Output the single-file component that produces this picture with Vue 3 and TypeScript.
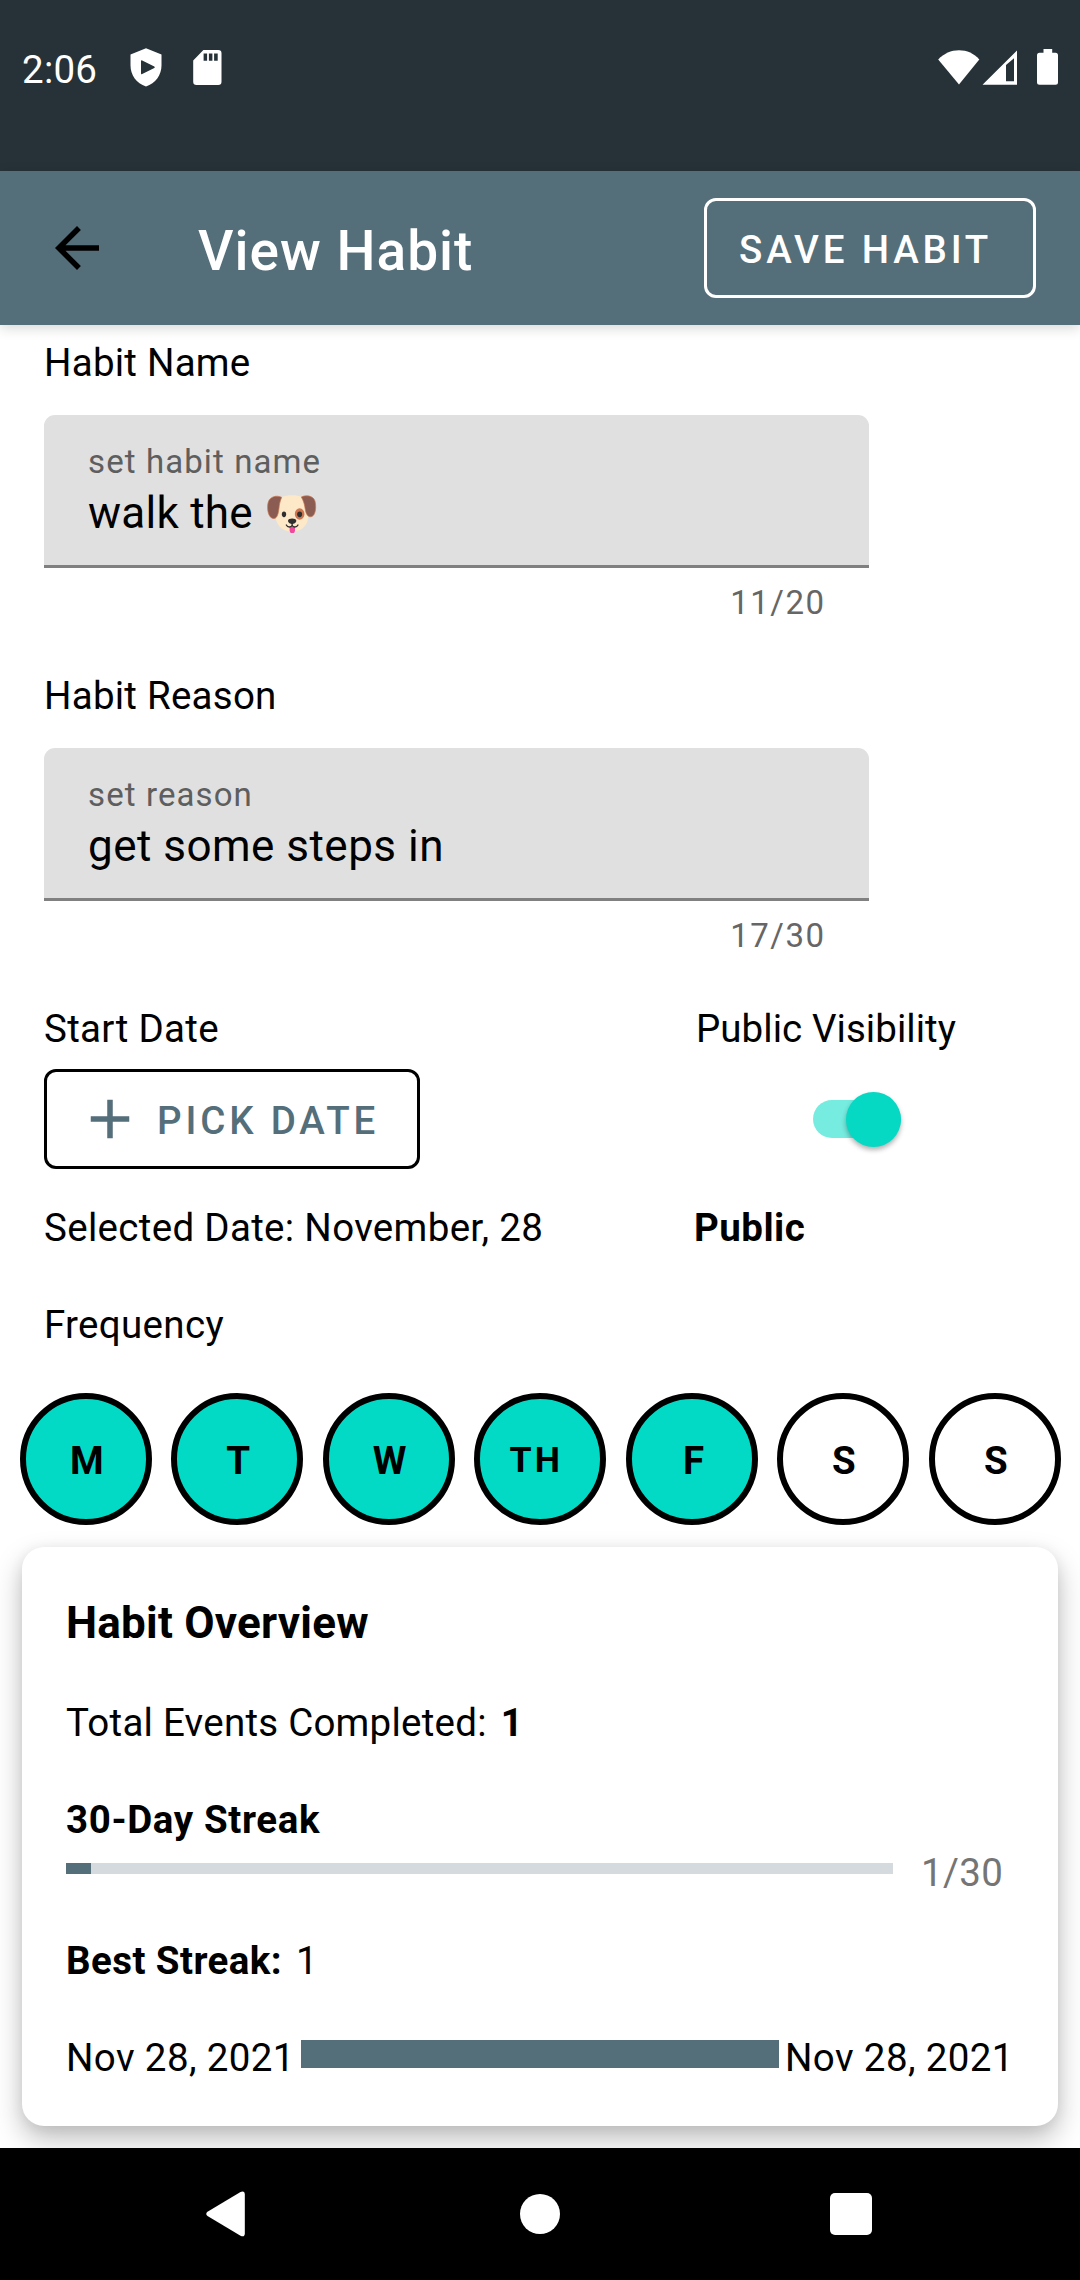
<script setup lang="ts">
interface Field {
  label: string
  hint: string
  value: string
  emoji: boolean
  counter: string
}

interface Day {
  label: string
  on: boolean
  size?: 'small'
  shift: number
}

const fields: Field[] = [
  { label: 'Habit Name', hint: 'set habit name', value: 'walk the', emoji: true, counter: '11/20' },
  { label: 'Habit Reason', hint: 'set reason', value: 'get some steps in', emoji: false, counter: '17/30' },
]

const days: Day[] = [
  { label: 'M', on: true, shift: 5 },
  { label: 'T', on: true, shift: 5 },
  { label: 'W', on: true, shift: 5 },
  { label: 'TH', on: true, size: 'small', shift: -8 },
  { label: 'F', on: true, shift: 7 },
  { label: 'S', on: false, shift: 5 },
  { label: 'S', on: false, shift: 6 },
]

const streakPercent = 3
</script>

<template>
  <div class="screen">
    <div class="status">
      <span class="clock">2:06</span>
      <svg class="shield" width="32" height="39" viewBox="0 0 32 39">
        <path fill="#fff" fill-rule="evenodd" d="M16 .3 31.5 6.6V17.500C31.500 27 25.500 35.500 16 38.400 6.500 35.500 .5 27 .5 17.500V6.600ZM11 13.200V25.200Q11 26.600 12.200 26L24.300 20Q25.400 19.200 24.300 18.500L12.200 12.500Q11 12 11 13.200Z" />
      </svg>
      <svg class="sd" width="29" height="35" viewBox="0 0 29 35">
        <path fill="#fff" fill-rule="evenodd" d="M10.400 0H25.200Q28.500 0 28.500 3.300V31.700Q28.500 35 25.200 35H3.500Q.2 35 .2 31.700V10.400ZM10.600 3.500V10.700H14.100V3.500ZM15.900 3.500V10.700H19.400V3.500ZM21.100 3.500V10.700H24.700V3.500Z" />
      </svg>
      <svg class="wifi" width="42" height="35" viewBox="0 0 42 35">
        <path fill="#fff" d="M.2 9.500C6 3.500 13 .3 21 .3S36 3.500 41.300 9.500L21 34.500Z" />
      </svg>
      <svg class="signal" width="36" height="35" viewBox="0 0 36 35">
        <path fill="#fff" fill-rule="evenodd" d="M.5 34.800 35 .6V34.800ZM24 15V31.200H32V8.200Z" />
      </svg>
      <svg class="battery" width="21" height="36" viewBox="0 0 21 36">
        <path fill="#fff" d="M6.500 0H15.200V3.700H18.500Q21 3.700 21 6.200V33.300Q21 35.800 18.500 35.800H2.500Q0 35.800 0 33.300V6.200Q0 3.700 2.500 3.700H6.500Z" />
      </svg>
    </div>

    <header class="appbar">
      <svg class="back" width="66" height="66" viewBox="0 0 24 24">
        <path d="M20 11H7.830l5.590-5.590L12 4l-8 8 8 8 1.410-1.410L7.830 13H20v-2z" />
      </svg>
      <h1 class="title">View Habit</h1>
      <button class="save">SAVE HABIT</button>
    </header>

    <main class="content">
      <section v-for="f in fields" :key="f.label" class="group">
        <div class="label">{{ f.label }}</div>
        <div class="field">
          <div class="hint">{{ f.hint }}</div>
          <div class="value" :class="{ 'with-emoji': f.emoji }">
            <span>{{ f.value }}</span>
            <svg v-if="f.emoji" class="dog" width="49.300" height="38.300" viewBox="54 44 148 115" role="img" aria-label="dog face">
              <path fill="#fde8c8" d="M128 45C154 45 166 51 172 70C177 84 179 101 177 115C174 139 154 154 129 154C104 154 84 139 80 113C78 98 79 83 85 69C91 51 103 45 128 45Z" />
              <path fill="#8b5d52" stroke="#c9764f" stroke-width="2" d="M98 51C82 43 61 49 57 68C54 83 56 108 70 114C85 119 88 99 90 84C91 73 93 63 98 51Z" />
              <path fill="#8b5d52" stroke="#c9764f" stroke-width="2" d="M157 50C171 43 193 46 198 62C202 76 201 102 190 108C179 114 171 102 169 88C167 73 164 62 157 50Z" />
              <ellipse cx="152" cy="101" rx="14.500" ry="17" fill="#cf7650" />
              <ellipse cx="105" cy="102" rx="6.500" ry="8.500" fill="#2f2f2f" />
              <ellipse cx="152" cy="102" rx="7.500" ry="8.500" fill="#2f2f2f" />
              <path fill="#f0489c" d="M122 139H138V151Q137 159 130 159T122 151Z" />
              <path fill="#2f2f2f" d="M117 121C117 112 142 112 142 121C142 127 134 131 129.500 131S117 127 117 121Z" />
              <path fill="none" stroke="#2f2f2f" stroke-width="4" stroke-linecap="round" d="M112 134C116 142 127 142 129.500 135C132 142 143 142 147 134M129.500 129V136" />
            </svg>
          </div>
        </div>
        <div class="counter">{{ f.counter }}</div>
      </section>

      <section class="options">
        <div class="col">
          <div class="label start">Start Date</div>
          <button class="pick">
            <svg width="66" height="66" viewBox="0 0 24 24">
              <path d="M19 13h-6v6h-2v-6H5v-2h6V5h2v6h6v2z" />
            </svg>
            <span>PICK DATE</span>
          </button>
          <div class="label selected">Selected Date: November, 28</div>
        </div>
        <div class="col">
          <div class="label visibility">Public Visibility</div>
          <div class="switch-row">
            <div class="track"><div class="thumb"></div></div>
          </div>
          <div class="label bold">Public</div>
        </div>
      </section>

      <div class="label frequency">Frequency</div>
      <div class="days">
        <div v-for="(d, i) in days" :key="i" class="day" :class="[{ on: d.on }, d.size]">
          <span :style="{ marginLeft: d.shift + 'px' }">{{ d.label }}</span>
        </div>
      </div>

      <section class="card">
        <h2 class="card-title">Habit Overview</h2>
        <div class="line total"><span>Total Events Completed:</span><b>1</b></div>
        <div class="line bold streak">30-Day Streak</div>
        <div class="progress-row">
          <div class="progress"><div class="bar" :style="{ width: streakPercent + '%' }"></div></div>
          <span class="ratio">1/30</span>
        </div>
        <div class="line best"><b>Best Streak:</b><span>1</span></div>
        <div class="range">
          <span>Nov 28, 2021</span>
          <div class="range-bar"></div>
          <span>Nov 28, 2021</span>
        </div>
      </section>
    </main>

    <nav class="nav">
      <svg width="40" height="46" viewBox="0 0 40 46">
        <path fill="#fff" d="M1.500 20.800 34.500 1Q38.800-.5 38.800 3.500V42.500Q38.800 46.500 34.500 44.800L1.500 25Q-1 22.900 1.500 20.800Z" />
      </svg>
      <div class="home"></div>
      <div class="recent"></div>
    </nav>
  </div>
</template>

<style>
body {
  margin: 0;
  background: #fff;
}
</style>

<style scoped>
.screen {
  width: 1080px;
  height: 2280px;
  overflow: hidden;
  display: flex;
  flex-direction: column;
  background: #fff;
  color: #000;
  font-family: Roboto, "Liberation Sans", sans-serif;
  font-size: 38.5px;
  line-height: 51px;
  letter-spacing: 0.24px;
}
.status {
  box-sizing: border-box;
  height: 171px;
  flex: none;
  display: flex;
  align-items: flex-start;
  padding: 44px 22px 0;
  background: #263238;
  color: #fff;
}
.clock { width: 108px; }
.shield { margin-top: 4px; }
.sd { margin: 6px 0 0 31px; }
.wifi { margin: 6px 0 0 auto; }
.signal { margin: 6px 0 0 2px; }
.battery { margin: 5px 0 0 19px; }
svg { display: block; flex: none; }
.appbar {
  box-sizing: border-box;
  position: relative;
  height: 154px;
  flex: none;
  display: flex;
  align-items: center;
  padding: 0 44px;
  background: #546e7a;
  color: #fff;
  box-shadow: 0 3px 12px rgba(0, 0, 0, 0.16);
}
.back { fill: #000; }
.title {
  margin: 6px 0 0 88px;
  font-size: 55px;
  line-height: 64px;
  font-weight: 500;
  letter-spacing: 1px;
}
button {
  box-sizing: border-box;
  height: 100px;
  border: 3px solid #fff;
  border-radius: 12px;
  background: transparent;
  color: #fff;
  font-family: inherit;
  font-size: 38.5px;
  line-height: 51px;
  font-weight: 500;
  letter-spacing: 3.84px;
  text-align: left;
  white-space: nowrap;
}
.save {
  width: 332px;
  margin-left: auto;
  padding: 3px 0 0 32px;
}
.content {
  height: 1823px;
  flex: none;
  overflow: hidden;
  display: flex;
  flex-direction: column;
  padding-top: 12px;
  box-sizing: border-box;
}
.label { white-space: nowrap; }
.bold { font-weight: 700; }
.group {
  width: 825px;
  margin: 0 0 45px 44px;
}
.field {
  box-sizing: border-box;
  height: 153px;
  margin-top: 27px;
  padding: 24px 0 0 44px;
  border-bottom: 3px solid #808080;
  border-radius: 11px 11px 0 0;
  background: #e0e0e0;
}
.hint {
  color: #5e5e5e;
  font-size: 33px;
  line-height: 45px;
  letter-spacing: 1.1px;
}
.value {
  display: flex;
  font-size: 44px;
  line-height: 60px;
  letter-spacing: 0.48px;
  margin-top: -1px;
}
.with-emoji { letter-spacing: 0.25px; }
.dog { margin: 12px 0 0 14.5px; }
.counter {
  margin-top: 12px;
  padding-right: 43.5px;
  text-align: right;
  font-size: 33px;
  line-height: 45px;
  letter-spacing: 1.5px;
  color: #666;
}
.options {
  display: grid;
  grid-template-columns: 650px 1fr;
  margin-left: 44px;
}
.start, .selected, .frequency { letter-spacing: 0.32px; }
.pick {
  display: flex;
  align-items: center;
  width: 376px;
  margin: 15px 0 33px;
  padding: 0 0 0 30px;
  border-color: #000;
  color: #546e7a;
}
.pick svg { fill: #546e7a; }
.pick span { margin: 3px 0 0 14px; }
.visibility { padding-left: 2px; letter-spacing: 0.05px; }
.col .bold { letter-spacing: 0.45px; }
.switch-row {
  height: 100px;
  margin: 15px 0 33px;
  display: flex;
  align-items: center;
  padding-left: 119px;
}
.track {
  width: 88px;
  height: 38px;
  border-radius: 19px;
  background: #76ebdf;
  display: flex;
  align-items: center;
  justify-content: flex-end;
}
.thumb {
  width: 55px;
  height: 55px;
  flex: none;
  border-radius: 50%;
  background: #05d8c3;
  box-shadow: 0 3px 5px rgba(0, 0, 0, 0.3);
}
.frequency { margin: 46px 0 0 44px; }
.days {
  display: flex;
  gap: 19.45px;
  margin: 43px 0 0 20px;
}
.day {
  box-sizing: border-box;
  flex: none;
  width: 132px;
  height: 132px;
  border: 6px solid #000;
  border-radius: 50%;
  display: flex;
  align-items: center;
  justify-content: center;
  padding-top: 3px;
  font-weight: 700;
  letter-spacing: 3.44px;
}
.day.on { background: #03dac5; }
.day.small { font-size: 35.75px; letter-spacing: 3.2px; }
.card {
  box-sizing: border-box;
  height: 579px;
  margin: 22px 22px 0;
  padding: 46px 44px 0;
  border-radius: 22px;
  background: #fff;
  box-shadow: 0 13px 28px rgba(0, 0, 0, 0.26), 0 2px 14px rgba(0, 0, 0, 0.06);
}
.card-title {
  margin: 0;
  font-size: 44px;
  line-height: 60px;
  font-weight: 700;
}
.line { display: flex; white-space: nowrap; }
.total { margin-top: 44px; }
.total b { margin-left: 14px; }
.streak { margin-top: 46px; letter-spacing: 0.62px; }
.progress-row { display: flex; margin-top: 2px; }
.progress {
  width: 827px;
  height: 11px;
  margin: 16px 28px 0 0;
  background: #d4dadd;
}
.bar { height: 100%; background: #546e7a; }
.ratio { color: #757575; letter-spacing: 0.4px; }
.best { margin-top: 37px; letter-spacing: 0.42px; }
.best span { margin-left: 14px; }
.range {
  display: flex;
  margin: 46px -20px 0 0;
  white-space: nowrap;
  letter-spacing: 0.38px;
}
.range > span:first-child { width: 235px; }
.range-bar {
  width: 478px;
  height: 28px;
  margin: 8px 6px 0 0;
  background: #546e7a;
}
.nav {
  position: relative;
  height: 132px;
  flex: none;
  display: flex;
  align-items: center;
  background: #000;
  box-sizing: border-box;
  padding-left: 206px;
}
.home {
  width: 40px;
  height: 40px;
  margin-left: 274px;
  border-radius: 50%;
  background: #fff;
}
.recent {
  width: 42px;
  height: 42px;
  margin-left: 270px;
  border-radius: 5px;
  background: #fff;
}
</style>
